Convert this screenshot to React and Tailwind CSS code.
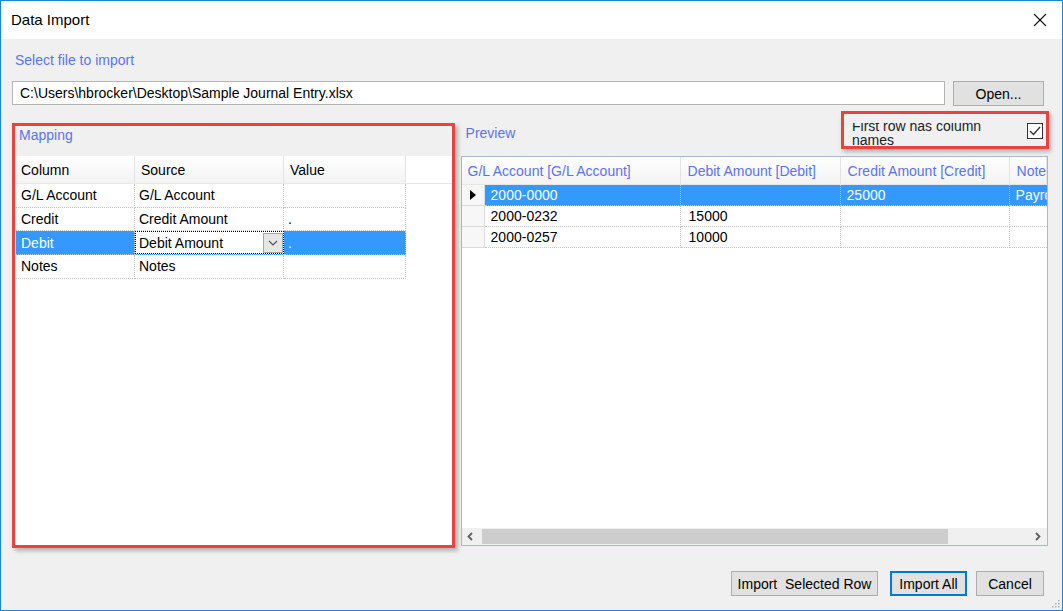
import React from 'react';

const mapRows = [
  { col: 'G/L Account', src: 'G/L Account', val: '' },
  { col: 'Credit', src: 'Credit Amount', val: '.' },
  { col: 'Debit', src: 'Debit Amount', val: '.', sel: true },
  { col: 'Notes', src: 'Notes', val: '' },
];

const previewRows = [
  { acct: '2000-0000', debit: '', credit: '25000', note: 'Payroll', sel: true },
  { acct: '2000-0232', debit: '15000', credit: '', note: '' },
  { acct: '2000-0257', debit: '10000', credit: '', note: '' },
];

const headCell = 'h-full flex items-center border-r border-[#e3e3e3] bg-gradient-to-b from-white to-[#f3f3f3]';

const MappingGrid = () => (
  <div className="flex-1 ml-[1px] bg-white flex flex-col">
    <div className="flex h-[28px] border-b border-[#e8e8e8]">
      <div className={`${headCell} w-[119px] pl-[5px]`}>Column</div>
      <div className={`${headCell} w-[149px] pl-[6px]`}>Source</div>
      <div className={`${headCell} w-[122px] pl-[6px]`}>Value</div>
    </div>
    {mapRows.map((r) => (
      <div key={r.col} className={`flex h-[23.67px] w-[390px] ${r.sel ? 'bg-[#3399ff]' : ''}`}>
        <div className={`w-[119px] pl-[5px] flex items-center border-r border-b border-dotted border-[#c4c4c4] ${r.sel ? 'text-white' : 'text-black'}`}>{r.col}</div>
        {r.sel ? (
          <div className="w-[149px] flex items-stretch border-b border-dotted border-[#c4c4c4]">
            <div className="flex-1 flex items-center bg-white border border-dotted border-black pl-[3px]">
              <span className="flex-1">{r.src}</span>
              <div className="w-[20px] h-[20px] bg-[#e6e6e6] border border-[#a8a8a8] flex items-center justify-center">
                <svg width="10" height="6" viewBox="0 0 10 6"><polyline points="1,1 5,5 9,1" fill="none" stroke="#555" strokeWidth="1.2" /></svg>
              </div>
            </div>
          </div>
        ) : (
          <div className="w-[149px] pl-[4px] flex items-center border-r border-b border-dotted border-[#c4c4c4]">{r.src}</div>
        )}
        <div className={`w-[122px] pl-[4px] flex items-center border-r border-b border-dotted border-[#c4c4c4] ${r.sel ? 'text-white' : ''}`}>{r.val}</div>
      </div>
    ))}
  </div>
);

const PreviewGrid = () => (
  <div className="w-[587px] h-[390px] border border-[#a9b8cc] bg-white flex flex-col overflow-hidden">
    <div className="flex h-[28px] text-[#5a74ec] border-b border-[#e6e6e6]">
      <div className={`${headCell} w-[219px] shrink-0 pl-[6px]`}>G/L Account [G/L Account]</div>
      <div className={`${headCell} w-[160px] shrink-0 pl-[7px]`}>Debit Amount [Debit]</div>
      <div className={`${headCell} w-[169px] shrink-0 pl-[7px]`}>Credit Amount [Credit]</div>
      <div className={`${headCell} flex-1 pl-[7px] overflow-hidden whitespace-nowrap`}>Notes [Notes]</div>
    </div>
    {previewRows.map((r) => (
      <div key={r.acct} className="flex h-[21px]">
        <div className="w-[23px] shrink-0 flex items-center justify-center bg-[#f7f7f7] border-r border-b border-[#dcdcdc]">
          {r.sel && (
            <svg width="6" height="10" viewBox="0 0 6 10"><polygon points="0,0 6,5 0,10" fill="#000" /></svg>
          )}
        </div>
        <div className={`flex flex-1 ${r.sel ? 'bg-[#3399ff] text-white' : 'text-black'}`}>
          <div className="w-[196px] shrink-0 pl-[6px] flex items-center border-r border-b border-dotted border-[#c4c4c4]">{r.acct}</div>
          <div className="w-[160px] shrink-0 pl-[8px] flex items-center border-r border-b border-dotted border-[#c4c4c4]">{r.debit}</div>
          <div className="w-[169px] shrink-0 pl-[6px] flex items-center border-r border-b border-dotted border-[#c4c4c4]">{r.credit}</div>
          <div className="flex-1 pl-[6px] flex items-center border-b border-dotted border-[#c4c4c4] overflow-hidden whitespace-nowrap">{r.note}</div>
        </div>
      </div>
    ))}
    <div className="flex-1" />
    <div className="h-[17px] bg-[#f0f0f0] flex items-center">
      <div className="w-[17px] h-full flex items-center justify-center">
        <svg width="6" height="9" viewBox="0 0 6 9"><polyline points="5,1 1.5,4.5 5,8" fill="none" stroke="#606060" strokeWidth="1.8" /></svg>
      </div>
      <div className="ml-[3px] w-[466px] h-[15px] bg-[#cdcdcd]" />
      <div className="flex-1" />
      <div className="w-[17px] h-full flex items-center justify-center">
        <svg width="6" height="9" viewBox="0 0 6 9"><polyline points="1,1 4.5,4.5 1,8" fill="none" stroke="#606060" strokeWidth="1.8" /></svg>
      </div>
    </div>
  </div>
);

const Btn = ({ children, focused = false, className = '' }) => (
  <button
    className={`h-[25px] bg-[#e1e1e1] flex items-center justify-center whitespace-pre text-black ${
      focused ? 'border-2 border-[#0078d7]' : 'border border-[#adadad]'
    } ${className}`}
  >
    {children}
  </button>
);

export default function App() {
  return (
    <div className="relative w-[1063px] h-[611px] border border-[#1a86d9] bg-[#f0f0f0] flex flex-col overflow-hidden font-['Liberation_Sans',Arial,sans-serif] text-[14px] leading-[16px] text-black">
      {/* title bar */}
      <div className="h-[38px] bg-white flex items-center justify-between pl-[10px] pr-[15px] shrink-0">
        <span className="text-[15px] leading-[18px]">Data Import</span>
        <svg width="14" height="14" viewBox="0 0 14 14">
          <line x1="1" y1="1" x2="13" y2="13" stroke="#111" strokeWidth="1.1" />
          <line x1="13" y1="1" x2="1" y2="13" stroke="#111" strokeWidth="1.1" />
        </svg>
      </div>

      <div className="flex-1 flex flex-col pl-[11px] pr-[13px]">
        <div className="mt-[13px] ml-[3px] text-[#5a74ec]">Select file to import</div>

        <div className="mt-[13px] flex h-[25px] pr-[5px]">
          <div className="flex-1 h-[24px] bg-white border border-[#b4b4b4] flex items-center pl-[7px]">
            C:\Users\hbrocker\Desktop\Sample Journal Entry.xlsx
          </div>
          <Btn className="ml-[8px] w-[91px]">Open...</Btn>
        </div>

        <div className="mt-[5px] flex items-start">
          {/* mapping */}
          <div className="mt-[12px] w-[443px] h-[425px] border-[3px] border-[#e8433e] flex flex-col shadow-[3px_3px_4px_rgba(0,0,0,0.25)]">
            <div className="h-[30px] pl-[4px] pt-[1px] text-[#5a74ec]">Mapping</div>
            <MappingGrid />
          </div>

          {/* preview */}
          <div className="ml-[6px] w-[589px] flex flex-col">
            <div className="h-[45px] flex justify-between items-start">
              <div className="mt-[14px] pl-[5px] text-[#5a74ec]">Preview</div>
              <div className="w-[208px] h-[38px] border-[3px] border-[#e8433e] flex justify-between shadow-[2px_3px_4px_rgba(0,0,0,0.25)]">
                <div className="mt-[9px] ml-[8px] h-[23px] w-[150px] overflow-hidden">
                  <div className="-mt-[4px] leading-[14px] text-[#222]">First row has column names</div>
                </div>
                <div className="mt-[9px] mr-[3px] w-[16px] h-[16px] bg-white border border-[#333] flex items-center justify-center">
                  <svg width="12" height="10" viewBox="0 0 12 10"><polyline points="1,5 4.5,8.5 11,1" fill="none" stroke="#333" strokeWidth="1.3" /></svg>
                </div>
              </div>
            </div>
            <PreviewGrid />
          </div>
        </div>

        <div className="mt-[23px] flex justify-end pr-[5px]">
          <Btn className="w-[147px]">Import  Selected Row</Btn>
          <Btn focused className="ml-[12px] w-[77px]">Import All</Btn>
          <Btn className="ml-[9px] w-[68px]">Cancel</Btn>
        </div>
      </div>

      {/* resize grip */}
      <div className="absolute right-[2px] bottom-[2px] w-[9px] h-[9px]">
        <svg width="9" height="9" viewBox="0 0 9 9" fill="#b0b0b0">
          <rect x="7" y="1" width="1.5" height="1.5" />
          <rect x="4" y="4" width="1.5" height="1.5" />
          <rect x="7" y="4" width="1.5" height="1.5" />
          <rect x="1" y="7" width="1.5" height="1.5" />
          <rect x="4" y="7" width="1.5" height="1.5" />
          <rect x="7" y="7" width="1.5" height="1.5" />
        </svg>
      </div>
    </div>
  );
}
